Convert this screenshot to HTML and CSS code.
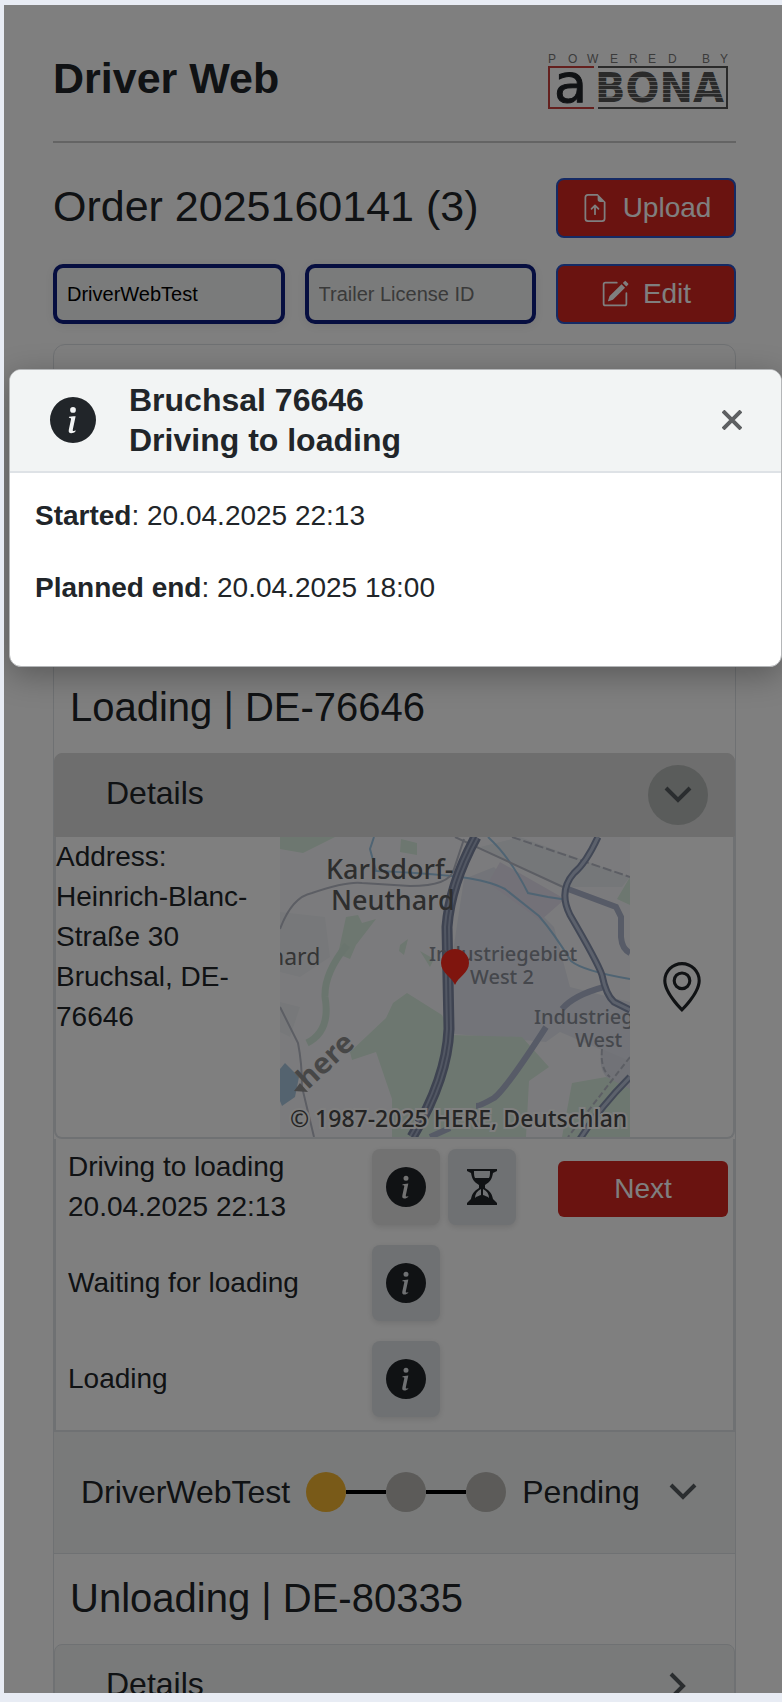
FILE: index.html
```html
<!DOCTYPE html>
<html lang="en">
<head>
<meta charset="utf-8">
<meta name="viewport" content="width=device-width, initial-scale=1">
<title>Driver Web</title>
<link rel="stylesheet" href="styles.css">
</head>
<body>
<svg class="symbols" aria-hidden="true">
  <symbol id="i-info" viewBox="0 0 16 16"><path d="M8 16A8 8 0 1 0 8 0a8 8 0 0 0 0 16m.93-9.412-1 4.705c-.07.34.029.533.304.533.194 0 .487-.07.686-.246l-.088.416c-.287.346-.92.598-1.465.598-.703 0-1.002-.422-.808-1.319l.738-3.468c.064-.293.006-.399-.287-.47l-.451-.081.082-.381 2.29-.287zM8 5.5a1 1 0 1 1 0-2 1 1 0 0 1 0 2"/></symbol>
  <symbol id="i-down" viewBox="0 0 28 18"><path d="M2 2l12 12L26 2" fill="none" stroke="currentColor" stroke-width="4"/></symbol>
  <symbol id="i-right" viewBox="0 0 18 28"><path d="M2 2l12 12L2 26" fill="none" stroke="currentColor" stroke-width="4"/></symbol>
</svg>
<div class="frame">
  <main class="app">
    <header class="top">
      <h1 class="brand">Driver Web</h1>
      <svg class="logo" viewBox="0 0 180 57" role="img" aria-label="Powered by aBona">
        <text class="logo-by" y="10" x="0 20 39 62 81 100 120 144 154 172">POWERED BY</text>
        <path d="M46 14H1v41h45" fill="none" stroke="#c8403c" stroke-width="2"/>
        <path d="M50 14h129v41H50" fill="none" stroke="#555" stroke-width="2"/>
        <text class="logo-a" x="6" y="49">a</text>
        <text class="logo-bona" x="47" y="49">BONA</text>
        <path d="M50 24.500h126M50 28.500h126M50 32.500h126M50 36.500h126M50 40.500h126M50 44.500h126" stroke="#fff" stroke-opacity=".65"/>
      </svg>
    </header>
    <section class="order">
      <h2 class="order-title">Order 2025160141 (3)</h2>
      <button class="btn btn-outlined" type="button">
        <svg class="btn-icon" viewBox="0 0 16 16"><path d="M8.500 11.500a.5.5 0 0 1-1 0V7.707L6.354 8.854a.5.5 0 1 1-.708-.708l2-2a.5.5 0 0 1 .708 0l2 2a.5.5 0 0 1-.708.708L8.500 7.707z"/><path d="M14 14V4.500L9.500 0H4a2 2 0 0 0-2 2v12a2 2 0 0 0 2 2h8a2 2 0 0 0 2-2M9.500 3A1.500 1.500 0 0 0 11 4.500h2V14a1 1 0 0 1-1 1H4a1 1 0 0 1-1-1V2a1 1 0 0 1 1-1h5.500z"/></svg>
        Upload
      </button>
      <input class="field" type="text" value="DriverWebTest" aria-label="Truck License ID">
      <input class="field" type="text" placeholder="Trailer License ID" aria-label="Trailer License ID">
      <button class="btn btn-outlined" type="button">
        <svg class="btn-icon" viewBox="0 0 16 16"><path d="M15.502 1.940a.5.5 0 0 1 0 .706L14.459 3.690l-2-2L13.502.646a.5.5 0 0 1 .707 0l1.293 1.293zm-1.750 2.456-2-2L4.939 9.210a.5.5 0 0 0-.121.196l-.805 2.414a.25.25 0 0 0 .316.316l2.414-.805a.5.5 0 0 0 .196-.12z"/><path d="M1 13.500A1.500 1.500 0 0 0 2.500 15h11a1.500 1.500 0 0 0 1.500-1.500v-6a.5.5 0 0 0-1 0v6a.5.5 0 0 1-.5.5h-11a.5.5 0 0 1-.5-.5v-11a.5.5 0 0 1 .5-.5H9a.5.5 0 0 0 0-1H2.500A1.500 1.500 0 0 0 1 2.500z"/></svg>
        Edit
      </button>
    </section>
    <section class="stops">
      <h3 class="stop-title">Loading | DE-76646</h3>
      <div class="details details-open">
        <span class="details-label">Details</span>
        <button class="toggle toggle-active" type="button" aria-label="Hide details"><svg width="28" height="18"><use href="#i-down"/></svg></button>
      </div>
      <div class="place">
        <address class="address">Address:<br>Heinrich-Blanc-Straße 30<br>Bruchsal, DE-76646</address>
        <svg class="map" viewBox="0 0 350 300" role="img" aria-label="Map of Bruchsal">
          <rect width="350" height="300" fill="#f7f7fa"/>
          <path d="M0 75l45 5 5 40-30 20-20-5zM0 165l20 5-10 30-10-5z" fill="#eef1f5"/>
          <path d="M184 42l30-12 60 60 16 60 60 15v60l-70-30-14 10-92-8-6-50z" fill="#e6e9f2"/>
          <path d="M200 10l40-10 110 40-8 10-62 0z" fill="#ebeef3"/>
          <path d="M220 25l65 37-25 22-10-8-42-30z" fill="#e7e2f0"/>
          <path d="M322 212l28 12v30l-16-8q-18-10-12-34z" fill="#e2e5ee"/>
          <g fill="#daeee0">
            <path d="M0 0h55l-32 16-23-4zM121 2l16 4v12l-17-3zM337 62l13-22v28z"/>
            <path d="M66 80l12-2 4 8 14-4-20 26-6 14-12-5zM120 108l8-6-4 16-5-4zM140 114l14 8-4 8z"/>
            <path d="M127 156l35 22 10 20 70 2 27 30-20 14-3 56H112V262l-16-47-24 8-2-8 36-34 7-15z"/>
            <path d="M292 246l34-6 24 12v48H282z"/>
          </g>
          <path d="M67 108Q44 136 45 160q6 34-18 46" fill="none" stroke="#d5ebdd" stroke-width="7"/>
          <path d="M5 226l14 14-4 20-13 9-2-5v-32z" fill="#a9c6de"/>
          <g fill="none" stroke="#9fc8e6" stroke-width="2">
            <path d="M94 0l-4 12 6 22q50 2 84 6 30 4 45 12l34 27q14 16 32 45 12 10 59 18"/>
            <path d="M208 0q22 20 40 56l20 4 20 3"/>
          </g>
          <g fill="none" stroke="#b9bcc8" stroke-width="2">
            <path d="M0 92q12-32 32-36 35-12 50-10l48 3q40 0 44-17l10-30"/>
            <path d="M175 0l108 50"/><path d="M232 0l118 40" stroke-dasharray="9 3"/>
            <path d="M0 170l18 36q4 20 4 44l12 50"/>
            <path d="M322 212q-2 20 8 28M350 220l-62 80" stroke-dasharray="6 3"/>
          </g>
          <g fill="none" stroke="#aeb6ce" stroke-width="6">
            <path d="M288 52l48 18 5 10v20q1 12 9 16"/>
            <path d="M324 150q-30 8-42 22M266 190q-40 62-52 71-14 8-18 8M170 291l-20 9"/>
          </g>
          <g fill="none">
            <path d="M318 0q-12 26-24 36-16 18-4 42 28 48 32 60 4 20 12 27l16 8M350 240q-30 30-50 62" stroke="#8590ac" stroke-width="7"/>
            <path d="M318 0q-12 26-24 36-16 18-4 42 28 48 32 60 4 20 12 27l16 8M350 240q-30 30-50 62" stroke="#b9c3d8" stroke-width="3"/>
            <path d="M196 0q-26 48-29 90 1 40 2 102-2 50-37 108" stroke="#7c86a2" stroke-width="11"/>
            <path d="M196 0q-26 48-29 90 1 40 2 102-2 50-37 108" stroke="#a4aec6" stroke-width="6"/>
            <path d="M196 0q-26 48-29 90 1 40 2 102-2 50-37 108" stroke="#7c86a2" stroke-width="2"/>
          </g>
          <g class="map-town"><text x="46" y="42">Karlsdorf-</text><text x="51" y="73">Neuthard</text></g>
          <text class="map-village" x="-10" y="128">hard</text>
          <g class="map-area"><text x="149" y="124">Industriegebiet</text><text x="190" y="147">West 2</text><text x="254" y="187">Industrieg</text><text x="295" y="210">West</text></g>
          <text class="map-here" transform="translate(28 253) rotate(-43)">here</text>
          <path d="M14 254l6-8 8 9z" fill="#8e8e8e"/>
          <text class="map-copy" x="10" y="290">© 1987-2025 HERE, Deutschlan</text>
          <path d="M175 148c-3-8-14-12-14-22a14 14 0 0 1 28 0c0 10-11 14-14 22z" fill="#ff2a1c"/>
        </svg>
        <svg class="pin" viewBox="0 0 16 16" role="img" aria-label="Open location"><path d="M12.166 8.940c-.524 1.062-1.234 2.120-1.960 3.070A32 32 0 0 1 8 14.580a32 32 0 0 1-2.206-2.570c-.726-.95-1.436-2.008-1.960-3.070C3.304 7.867 3 6.862 3 6a5 5 0 0 1 10 0c0 .862-.305 1.867-.834 2.940M8 16s6-5.686 6-10A6 6 0 0 0 2 6c0 4.314 6 10 6 10"/><path d="M8 8a2 2 0 1 1 0-4 2 2 0 0 1 0 4m0 1a3 3 0 1 0 0-6 3 3 0 0 0 0 6"/></svg>
      </div>
      <div class="steps">
        <div class="step">
          <div>Driving to loading<br>20.04.2025 22:13</div>
          <div class="step-tools">
            <button class="tool tool-active" type="button" aria-label="Info"><svg width="40" height="40"><use href="#i-info"/></svg></button>
            <button class="tool" type="button" aria-label="Waiting time"><svg width="30" height="36" viewBox="0 0 30 36"><path fill-rule="evenodd" d="M0 0h30v2l-4 2c-1 6-3 9-8 12v3c5 3 7 6 8 11l4 4v2H0v-2l4-4c1-5 3-8 8-11v-3C7 13 5 10 4 4L0 2zM7 2c0 3 0 5 1 7h14c1-2 1-4 1-7zM14 20c-4 2-6 5-6 9 2-2 4-2 6-3zM16 20v6c2 1 4 1 6 3 0-4-2-7-6-9z"/></svg></button>
          </div>
          <button class="btn btn-next" type="button">Next</button>
        </div>
        <div class="step">
          <div>Waiting for loading</div>
          <div class="step-tools"><button class="tool" type="button" aria-label="Info"><svg width="40" height="40"><use href="#i-info"/></svg></button></div>
        </div>
        <div class="step">
          <div>Loading</div>
          <div class="step-tools"><button class="tool" type="button" aria-label="Info"><svg width="40" height="40"><use href="#i-info"/></svg></button></div>
        </div>
      </div>
      <div class="status">
        <span>DriverWebTest</span>
        <div class="progress"><i class="dot dot-current"></i><i class="link"></i><i class="dot"></i><i class="link"></i><i class="dot"></i></div>
        <span>Pending</span>
        <button class="toggle status-toggle" type="button" aria-label="Show status"><svg width="28" height="18"><use href="#i-down"/></svg></button>
      </div>
      <h3 class="stop-title">Unloading | DE-80335</h3>
      <div class="details">
        <span class="details-label">Details</span>
        <button class="toggle" type="button" aria-label="Show details"><svg width="18" height="28"><use href="#i-right"/></svg></button>
      </div>
    </section>
  </main>
  <div class="backdrop"></div>
  <div class="dialog" role="dialog" aria-labelledby="dialog-title">
    <div class="dialog-head">
      <svg class="dialog-icon" width="46" height="46"><use href="#i-info"/></svg>
      <h2 class="dialog-title" id="dialog-title">Bruchsal 76646<br>Driving to loading</h2>
      <button class="close" type="button" aria-label="Close"><svg width="20" height="20" viewBox="0 0 20 20"><path d="M1 1l18 18M19 1L1 19" stroke="currentColor" stroke-width="4"/></svg></button>
    </div>
    <div class="dialog-body">
      <p class="fact"><b>Started</b>: 20.04.2025 22:13</p>
      <p class="fact"><b>Planned end</b>: 20.04.2025 18:00</p>
    </div>
  </div>
</div>
</body>
</html>
```
FILE: styles.css
```css
* { box-sizing: border-box; }
body {
  margin: 0;
  padding: 5px 0 9px 4px;
  height: 100vh;
  background: #e8ecf4;
  color: #212529;
  font: 28px/40px "Liberation Sans", Arial, sans-serif;
}
h1, h2, h3, p { margin: 0; font-weight: 400; }
button, input { font-family: inherit; color: inherit; }
svg { fill: currentColor; }
.symbols { position: absolute; width: 0; height: 0; }

.frame {
  position: relative;
  height: 100%;
  overflow: hidden;
  background: #fff;
}
.app { padding: 48px 46px 0 49px; }
.backdrop { position: absolute; inset: 0; background: rgba(0, 0, 0, .5); }

.top {
  display: flex;
  justify-content: space-between;
  align-items: flex-start;
  padding: 0 8px 31px 0;
  border-bottom: 2px solid #c8c8c8;
}
.brand { font-size: 43px; line-height: 50px; font-weight: 700; }
.logo { width: 180px; height: 57px; }
.logo-by { font-size: 12px; fill: #777; }
.logo-a { font: 54px "DejaVu Sans", sans-serif; stroke: #212529; stroke-width: 1; }
.logo-bona { font: bold 40px "DejaVu Sans", sans-serif; fill: #555; }

.order {
  display: grid;
  grid-template-columns: 1fr 1fr 180px;
  gap: 26px 20px;
  padding: 35px 0 20px;
}
.order-title { grid-column: span 2; font-size: 43px; line-height: 56px; white-space: nowrap; }
.btn {
  display: flex;
  justify-content: center;
  align-items: center;
  gap: 14px;
  height: 60px;
  padding: 0;
  border: 0;
  border-radius: 8px;
  background: #d42620;
  color: #fff;
  font-size: 28px;
}
.btn-outlined { border: 2px solid #2a55c8; }
.btn-icon { width: 28px; height: 28px; }
.btn-next { height: 56px; margin-top: 3px; border-radius: 6px; }
.field {
  width: 100%;
  min-width: 0;
  height: 60px;
  padding: 0 10px;
  border: 4px solid #0c1c80;
  border-radius: 10px;
  background: #f4f7f6;
  color: #000;
  font-size: 20px;
  box-shadow: 0 2px 12px rgba(0, 0, 0, .08);
}
.field::placeholder { color: #757575; opacity: 1; }

.stops {
  padding-top: 318px;
  border: 1px solid #dee2e6;
  border-radius: 12px 12px 0 0;
}
.stop-title { padding: 20px 16px 22px; font-size: 40px; line-height: 48px; }
.details {
  display: flex;
  justify-content: space-between;
  align-items: center;
  height: 84px;
  padding: 0 26px 0 51px;
  border: 1px solid #dee2e6;
  border-radius: 8px 8px 0 0;
  background: #f2f5f4;
  font-size: 32px;
}
.details-label { padding-bottom: 4px; }
.details-open { background: #dcdcdc; border-color: #dcdcdc; }
.toggle {
  display: flex;
  justify-content: center;
  align-items: center;
  width: 60px;
  height: 60px;
  padding: 0;
  border: 0;
  border-radius: 50%;
  background: none;
  color: #555a5e;
}
.toggle-active { background: #b4b8b6; }
.place {
  display: grid;
  grid-template-columns: 1fr 350px 103px;
  justify-items: center;
  align-items: center;
  border: 2px solid #dee2e6;
  border-top: 0;
  border-radius: 0 0 8px 8px;
}
.address { align-self: start; justify-self: stretch; font-style: normal; }
.map { width: 350px; height: 300px; font-family: "Noto Sans", sans-serif; }
.map-town { font-size: 27px; font-weight: 500; fill: #5c5c5c; }
.map-village { font-size: 23px; fill: #6a6a6a; }
.map-area { font-size: 20px; font-weight: 500; fill: #8b8f99; }
.map-here { font-size: 29px; font-weight: 700; fill: #8e8e8e; }
.map-copy { font-size: 23px; font-weight: 500; fill: #4a4a4a; paint-order: stroke; stroke: #fff; stroke-width: 4; }
.pin { width: 50px; height: 50px; }

.steps { padding-bottom: 3px; border: 2px solid #dee2e6; border-top: 0; }
.step {
  display: grid;
  grid-template-columns: 1fr 144px 170px;
  column-gap: 42px;
  align-items: center;
  height: 96px;
  padding: 0 5px 0 12px;
}
.step-tools { display: flex; gap: 8px; }
.tool {
  display: flex;
  justify-content: center;
  align-items: center;
  width: 68px;
  height: 76px;
  padding: 0;
  border: 0;
  border-radius: 8px;
  background: #dee2e6;
  box-shadow: 0 2px 6px rgba(0, 0, 0, .12);
}
.tool-active { background: #e4e4e4; }

.status {
  display: flex;
  align-items: center;
  gap: 16px;
  height: 122px;
  padding: 0 25px 2px 27px;
  border-bottom: 1px solid #dee2e6;
  background: #f2f5f4;
  font-size: 32px;
}
.progress { display: flex; align-items: center; }
.dot { width: 40px; height: 40px; border-radius: 50%; background: #b8b6b2; }
.dot-current { background: #f2b431; }
.link { width: 40px; height: 4px; background: #000; }
.status-toggle { margin-left: auto; }

.dialog {
  position: absolute;
  top: 364px;
  left: 5px;
  right: 0;
  border: 1px solid #b4b6b8;
  border-radius: 12px;
  background: #fff;
  box-shadow: 0 8px 32px rgba(0, 0, 0, .3);
  overflow: hidden;
}
.dialog-head {
  display: flex;
  align-items: center;
  padding: 10px 39px 11px 40px;
  border-bottom: 2px solid #dee2e6;
  background: #f2f4f4;
}
.dialog-title { margin-left: 33px; font-size: 32px; font-weight: 700; }
.close { display: flex; margin-left: auto; padding: 0; border: 0; background: none; color: #5e6062; }
.dialog-body { display: grid; gap: 32px; padding: 23px 25px 58px; }
```
